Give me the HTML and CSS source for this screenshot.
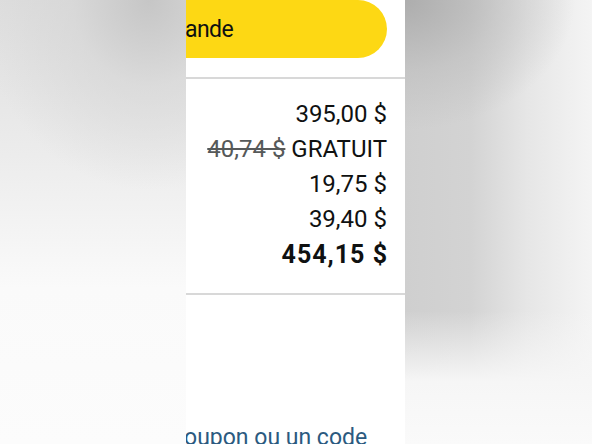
FILE: index.html
```html
<!DOCTYPE html>
<html lang="fr">
<head>
  <meta charset="UTF-8">
  <meta name="viewport" content="width=device-width, initial-scale=1.0">
  <title>Panier</title>
  <link rel="stylesheet" href="styles.css">
</head>
<body>

  <div class="frame">
    <div class="blur blur-left"></div>

    <div class="screen">
      <div class="order-btn">Passer la commande</div>

      <div class="summary">
        <div class="row">395,00 $</div>
        <div class="row"><s class="old">40,74 $</s> GRATUIT</div>
        <div class="row">19,75 $</div>
        <div class="row">39,40 $</div>
        <div class="row total">454,15 $</div>
      </div>

      <div class="coupon">coupon ou un code</div>
    </div>

    <div class="blur blur-right"></div>
  </div>

</body>
</html>
```

FILE: styles.css
```css
body {
  margin: 0;
  padding: 0;
  font-family: Roboto, "Noto Sans", Arial, sans-serif;
  background-color: #fafafa;
}

.frame {
  display: grid;
  grid-template-columns: 186px 219px 187px;
  width: 592px;
  height: 444px;
  overflow: hidden;
}

.blur-left {
  background:
    radial-gradient(ellipse 170px 190px at 80% 0%, #c6c6c6 0%, rgba(212, 212, 212, 0.6) 45%, rgba(250, 250, 250, 0) 100%),
    linear-gradient(to bottom, #dedede 0%, #ececec 35%, #fafafa 65%, #fcfcfc 100%);
}

.blur-right {
  background:
    radial-gradient(ellipse 170px 130px at 0% 0%, #adadad 0%, rgba(188, 188, 188, 0.55) 55%, rgba(235, 235, 235, 0) 100%),
    linear-gradient(to bottom, rgba(250, 250, 250, 0) 0%, rgba(250, 250, 250, 0) 70%, #f6f6f6 86%, #fafafa 100%),
    linear-gradient(to right, #cfcfcf 0%, #d3d3d3 35%, #e6e6e6 65%, #f4f4f4 100%);
}

.screen {
  background-color: white;
  overflow: hidden;
  display: flex;
  flex-direction: column;
}

.order-btn {
  flex: none;
  height: 58px;
  margin-left: -300px;
  width: 501px;
  box-sizing: border-box;
  padding-right: 154px;
  background-color: #fdd814;
  border-radius: 0 29px 29px 0;
  display: flex;
  align-items: center;
  justify-content: flex-end;
  font-size: 23px;
  letter-spacing: -0.6px;
  color: #0f1111;
  white-space: nowrap;
}

.summary {
  margin-top: 19px;
  border-top: 2px solid #d8d8d8;
  border-bottom: 2px solid #d8d8d8;
  padding: 18px 18px 21px 0;
  display: flex;
  flex-direction: column;
  align-items: flex-end;
}

.row {
  font-size: 24px;
  line-height: 35px;
  color: #0f1111;
  white-space: nowrap;
}

.old {
  color: #565959;
}

.total {
  font-size: 25px;
  font-weight: bold;
  letter-spacing: 1px;
  margin-right: -1px;
}

.coupon {
  margin-top: auto;
  margin-left: -14px;
  font-size: 23px;
  line-height: 26px;
  color: #2b5a80;
  white-space: nowrap;
  margin-bottom: -7px;
}
```
